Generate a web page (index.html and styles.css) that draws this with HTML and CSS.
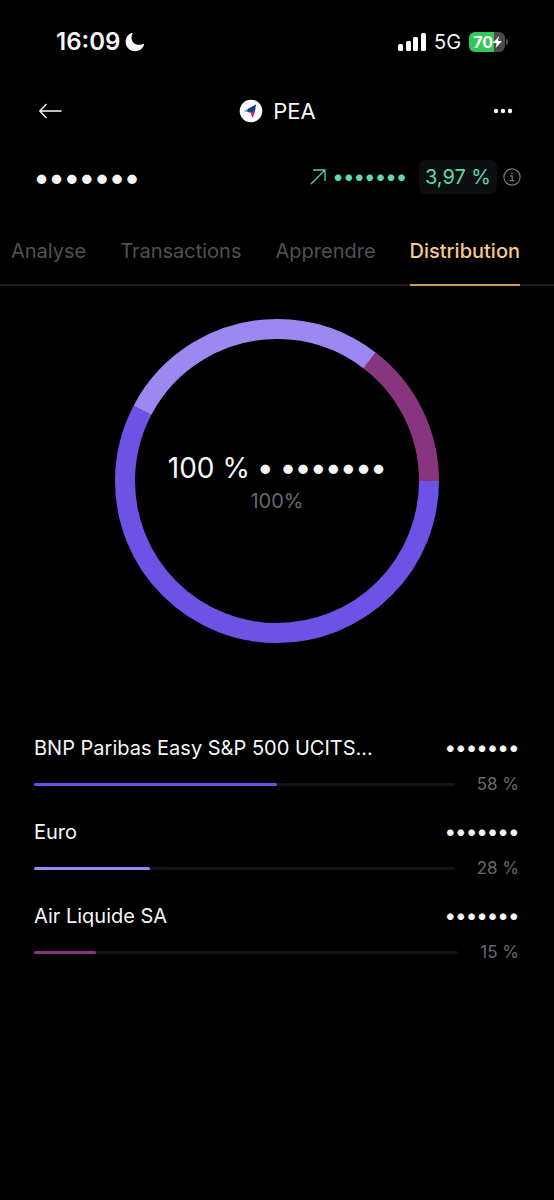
FILE: index.html
```html
<!DOCTYPE html>
<html lang="fr">
<head>
  <meta charset="UTF-8">
  <meta name="viewport" content="width=device-width, initial-scale=1.0">
  <title>PEA - Distribution</title>

  <link rel="stylesheet" href="styles.css">
</head>
<body>

  <div class="status-bar">
    <div class="status-time">
      <span>16:09</span>
      <svg width="20" height="20" viewBox="0 0 20 20" aria-hidden="true">
        <path d="M6.800 1C3 2.300.6 5.700.6 9.800c0 5.200 4.200 9.400 9.400 9.400 4.200 0 7.800-2.600 9.100-6.400.3-.8-.4-1.300-1.100-.9-1.200.6-2.500.9-3.900.9-4.500 0-7.600-3.100-7.600-7.400 0-1.200.300-2.300.9-3.400.5-.8.200-1.200-.6-1z" fill="#fff"/>
      </svg>
    </div>
    <div class="status-icons">
      <svg width="28" height="18" viewBox="0 0 28 18" aria-hidden="true">
        <g fill="#fff">
          <rect x="0" y="11" width="5" height="7" rx="1.5"/>
          <rect x="8" y="8" width="5" height="10" rx="1.5"/>
          <rect x="15" y="4" width="5" height="14" rx="1.5"/>
          <rect x="23" y="0" width="5" height="18" rx="1.5"/>
        </g>
      </svg>
      <span class="network">5G</span>
      <div class="battery">
        <span class="battery-body">70<svg width="9" height="12" viewBox="0 0 9 12" aria-hidden="true"><path d="M6 0L0 6.900h3.600L2.600 12 9 5H5z" fill="#fff"/></svg></span>
        <span class="battery-cap"></span>
      </div>
    </div>
  </div>

  <header class="header">
    <button type="button" class="icon-button" aria-label="Retour">
      <svg width="24" height="16" viewBox="0 0 24 16" fill="none" stroke="#fff" stroke-width="1.3">
        <path d="M23.500 8H1.500M8.500 1L1.800 8l6.700 7"/>
      </svg>
    </button>
    <h1 class="title">
      <svg width="24" height="24" viewBox="0 0 24 24" aria-hidden="true">
        <circle cx="12" cy="12" r="11.300" fill="#fff"/>
        <path d="M17 5.500L4.800 12.300 11.600 13.400z" fill="#22a7e0"/>
        <path d="M17 5.500L8.800 10.100 8.600 12.900 11.600 13.400 16 12.500z" fill="#1b3f7d"/>
        <path d="M11.600 13.300L13.700 19.300 16.100 12.200z" fill="#d6147f"/>
      </svg>
      PEA
    </h1>
    <button type="button" class="icon-button" aria-label="Plus">
      <svg width="20" height="6" viewBox="0 0 20 6" fill="#fff">
        <circle cx="3" cy="3" r="2.200"/>
        <circle cx="10" cy="3" r="2.200"/>
        <circle cx="17" cy="3" r="2.200"/>
      </svg>
    </button>
  </header>

  <section class="summary">
    <span class="masked-large">•••••••</span>
    <div class="performance">
      <svg width="16" height="16" viewBox="0 0 16 16" fill="none" stroke="#4fd8a5" stroke-width="1.300" aria-hidden="true">
        <path d="M1 15L15 1M3 1h12v11"/>
      </svg>
      <span class="gain masked">•••••••</span>
      <span class="rate">3,97 %</span>
      <button type="button" class="icon-button" aria-label="Informations">
        <svg width="18" height="18" viewBox="0 0 18 18" fill="none" stroke="#77777f" stroke-width="1.200">
          <circle cx="9" cy="9" r="8.100"/>
          <path d="M7 7.800h2.200v4.700M6.500 12.700h5M8.200 5.300h1.500"/>
        </svg>
      </button>
    </div>
  </section>

  <nav class="tabs">
    <a href="#analyse">Analyse</a>
    <a href="#transactions">Transactions</a>
    <a href="#apprendre">Apprendre</a>
    <a href="#distribution" class="active">Distribution</a>
  </nav>

  <main>
    <div class="chart">
      <svg class="donut" viewBox="0 0 324 324" fill="none" stroke-width="20" aria-hidden="true">
        <circle cx="162" cy="162" r="152" pathLength="1000" stroke="#6e52e5" stroke-dasharray="577 423"/>
        <circle cx="162" cy="162" r="152" pathLength="1000" stroke="#9d87f1" stroke-dasharray="278 722" stroke-dashoffset="-577"/>
        <circle cx="162" cy="162" r="152" pathLength="1000" stroke="#87357f" stroke-dasharray="146 854" stroke-dashoffset="-854"/>
      </svg>
      <div class="chart-label">
        <p class="total">100 % <span class="masked-large">• •••••••</span></p>
        <p class="share">100%</p>
      </div>
    </div>

    <ul class="holdings">
      <li>
        <div class="holding-row">
          <span>BNP Paribas Easy S&amp;P 500 UCITS...</span>
          <span class="masked">•••••••</span>
        </div>
        <div class="holding-row">
          <div class="bar"><div class="fill etf" style="width: 57.7%"></div></div>
          <span class="percent">58 %</span>
        </div>
      </li>
      <li>
        <div class="holding-row">
          <span>Euro</span>
          <span class="masked">•••••••</span>
        </div>
        <div class="holding-row">
          <div class="bar"><div class="fill cash" style="width: 27.6%"></div></div>
          <span class="percent">28 %</span>
        </div>
      </li>
      <li>
        <div class="holding-row">
          <span>Air Liquide SA</span>
          <span class="masked">•••••••</span>
        </div>
        <div class="holding-row">
          <div class="bar"><div class="fill stock" style="width: 14.7%"></div></div>
          <span class="percent">15 %</span>
        </div>
      </li>
    </ul>
  </main>

</body>
</html>
```
FILE: styles.css
```css
* {
  box-sizing: border-box;
}

body {
  font-family: 'Inter', sans-serif;
  font-size: 20px;
  line-height: 24px;
  background-color: #000;
  color: #f6f6f8;
  margin: 0;
  overflow-x: hidden;
}

svg {
  display: block;
  flex: none;
}

.icon-button {
  background: none;
  border: none;
  padding: 0;
  cursor: pointer;
}

/* Hidden amounts */
.masked {
  font-size: 21px;
  font-weight: 600;
}

.masked-large {
  font-size: 30px;
  font-weight: 600;
}

/* Status bar */
.status-bar {
  display: flex;
  justify-content: space-between;
  align-items: center;
  height: 83px;
  padding: 0 46px 0 56px;
}

.status-time {
  display: flex;
  align-items: center;
  gap: 5px;
  font-size: 24px;
  font-weight: 600;
}

.status-icons {
  display: flex;
  align-items: center;
  gap: 8px;
}

.battery {
  display: flex;
  align-items: center;
  gap: 1px;
}

.battery-body {
  display: flex;
  align-items: center;
  height: 20px;
  padding: 0 3px 0 4px;
  border-radius: 6px;
  background: linear-gradient(to right, #34c759 70%, #4b4b4e 70%);
  color: #fff;
  font-size: 16px;
  font-weight: 700;
}

.battery-cap {
  width: 2px;
  height: 6px;
  border-radius: 0 2px 2px 0;
  background-color: #4b4b4e;
}

/* Header */
.header {
  display: flex;
  justify-content: space-between;
  align-items: center;
  height: 55px;
  padding: 0 41px 0 38px;
}

.title {
  display: flex;
  align-items: center;
  gap: 10px;
  margin: 0;
  font-size: 22px;
  font-weight: 400;
}

/* Balance */
.summary {
  display: flex;
  justify-content: space-between;
  align-items: center;
  height: 78px;
  padding: 0 33px 0 34px;
}

.performance {
  display: flex;
  align-items: center;
  color: #5fd9ae;
}

.gain {
  margin: 0 12px 0 7px;
}

.rate {
  margin-right: 6px;
  padding: 5px 6px;
  border-radius: 6px;
  background-color: #0d0e10;
}

/* Tabs */
.tabs {
  display: flex;
  justify-content: flex-end;
  gap: 34px;
  height: 70px;
  padding: 0 34px 0 11px;
  border-bottom: 2px solid #1d1d21;
}

.tabs a {
  height: 70px;
  padding-top: 23px;
  color: #505057;
  text-decoration: none;
}

.tabs .active {
  border-bottom: 2px solid #c99c62;
  color: #f6c98d;
  font-weight: 500;
}

/* Donut chart */
.chart {
  display: grid;
  place-items: center;
  margin-top: 33px;
}

.donut,
.chart-label {
  grid-area: 1 / 1;
}

.donut {
  width: 324px;
}

.chart-label {
  padding-top: 2px;
  text-align: center;
}

.chart-label p {
  margin: 0;
}

.total {
  font-size: 28px;
  line-height: 36px;
}

.share {
  color: #68686f;
  line-height: 30px;
}

/* Holdings */
.holdings {
  display: grid;
  gap: 24px;
  margin: 93px 0 0;
  padding: 0 35px 0 34px;
  list-style: none;
}

.holding-row {
  display: flex;
  justify-content: space-between;
  align-items: center;
}

.holding-row + .holding-row {
  gap: 22px;
  margin-top: 12px;
}

.bar {
  flex: 1;
  height: 3px;
  border-radius: 2px;
  background-color: #151518;
}

.fill {
  height: 3px;
  border-radius: 2px;
}

.etf {
  background-color: #6e52e5;
}

.cash {
  background-color: #9d87f1;
}

.stock {
  background-color: #87357f;
}

.percent {
  color: #68686f;
  font-size: 17px;
}
```
